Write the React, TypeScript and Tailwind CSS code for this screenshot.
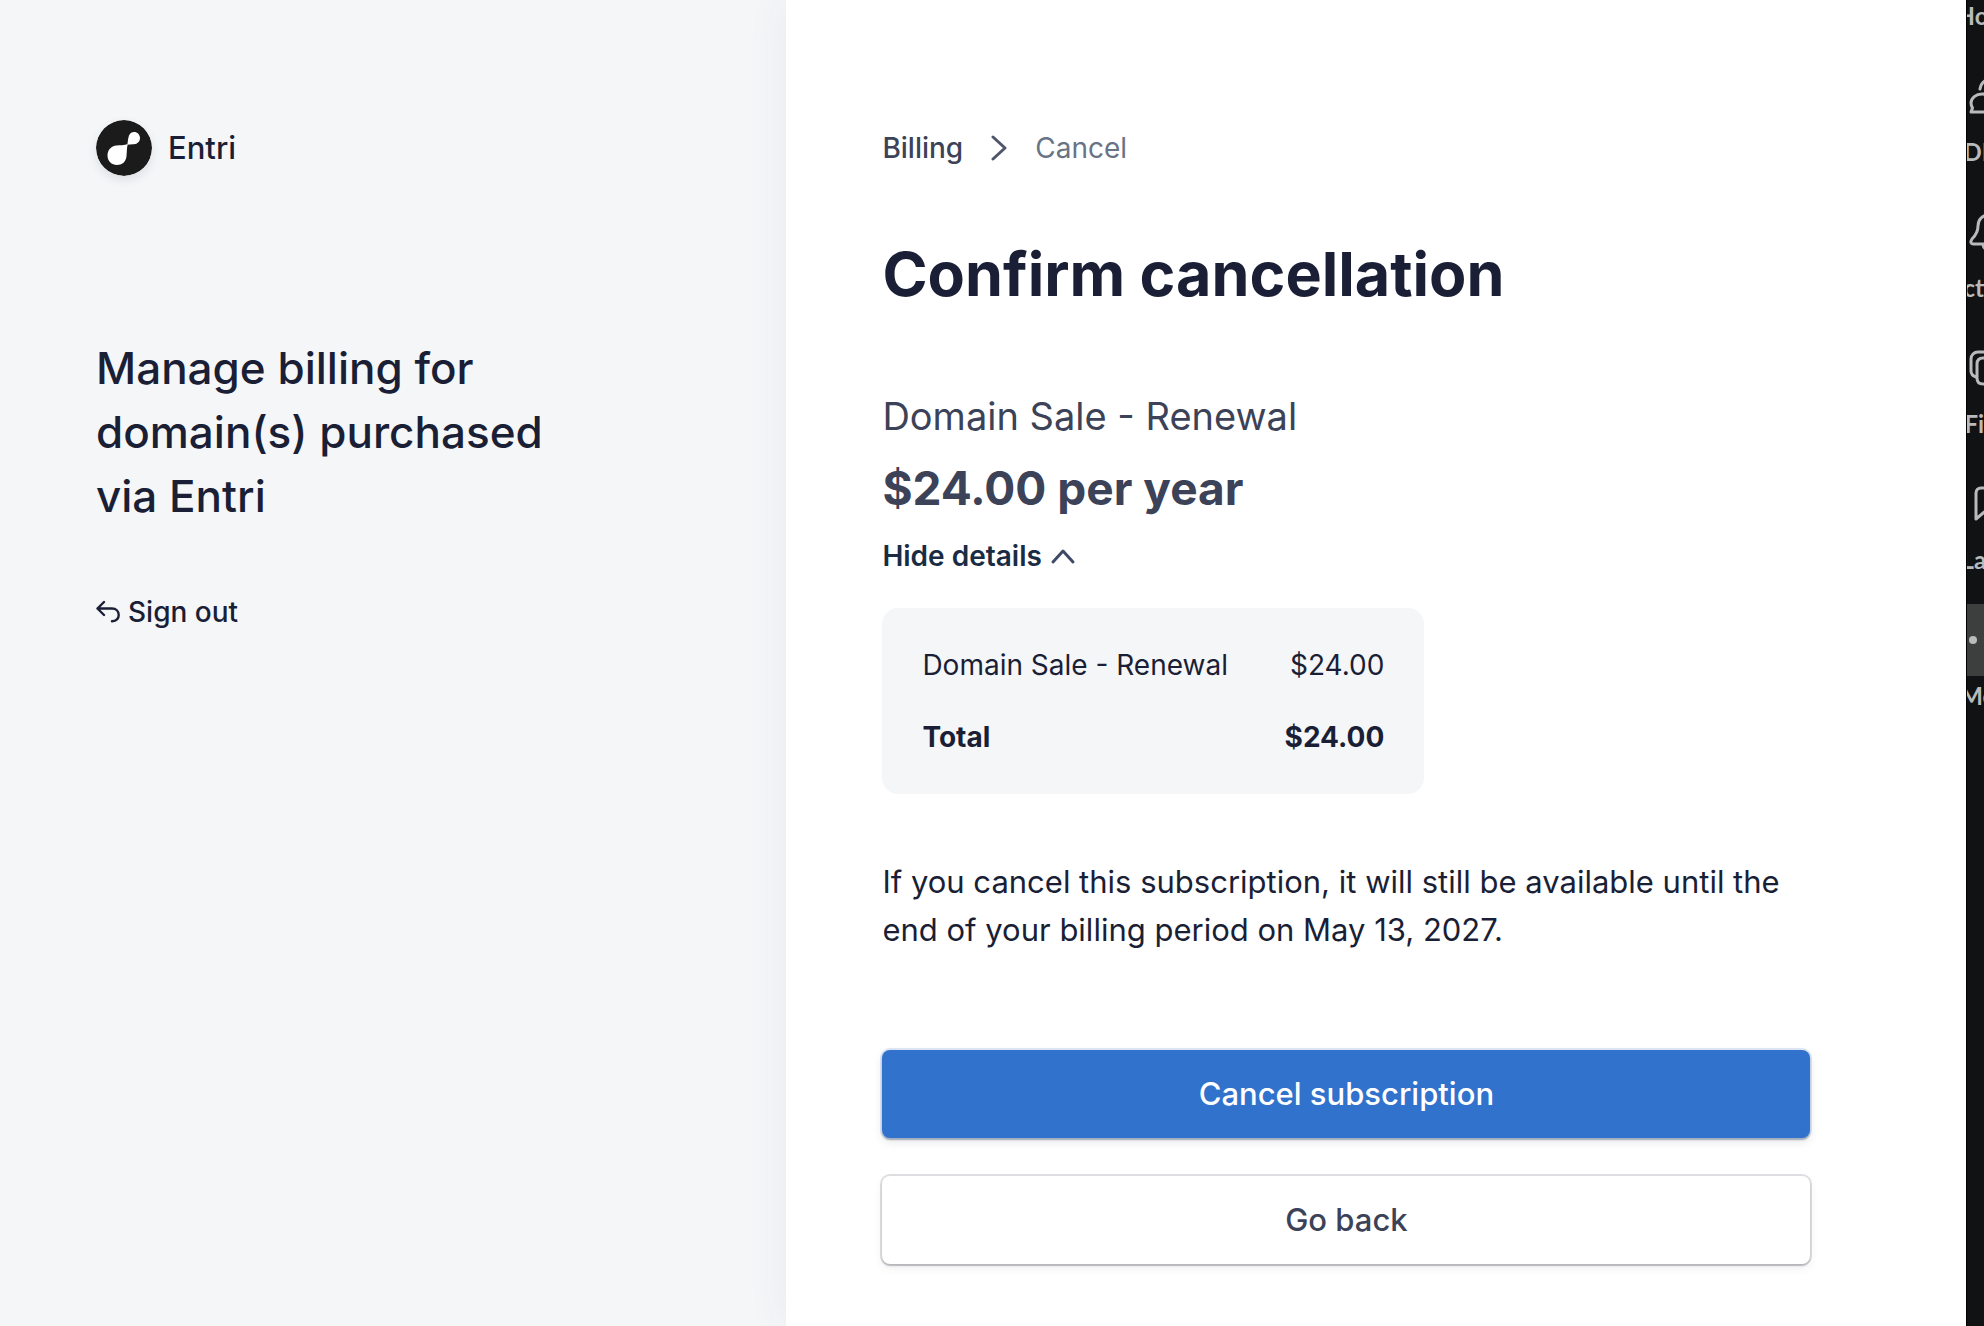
import type { ReactNode } from 'react';
import { useState } from 'react';

// ── Icons ────────────────────────────────────────────────────────────────────

function EntriLogo() {
  return (
    <svg viewBox="0 0 56 56" className="w-14 h-14 rounded-full shadow-[0_4px_10px_rgba(60,66,87,0.12)]" aria-hidden="true">
      <circle cx="28" cy="28" r="28" fill="#1b1b1b" />
      <path
        fill="#fff"
        d="M31.4 24.2C31.9 21 32 18.500 33 15.500C34 13 36 12 38 12C41.500 12 44 14.700 44 18C44 21.500 41.500 24 38 24.200C36 24.400 33.500 24.200 31.600 24.700C30.600 29 31 32.500 30.400 37C29.600 42 26 45 21 45C15.500 45 11.500 41 11.500 35.500C11.500 30 15 26 20.500 25.500C24.500 25.200 28 25.200 31.400 24.200Z"
      />
    </svg>
  );
}

function BackIcon() {
  return (
    <svg viewBox="0 0 24 24" className="w-6 h-6" fill="none" stroke="currentColor" strokeWidth={2.4} strokeLinecap="round" strokeLinejoin="round" aria-hidden="true">
      <path d="M8 2L1.500 8.500L8 15M1.500 8.500H16C20 8.500 22.700 11 22.700 15C22.700 18.700 20 21 16 21.300" />
    </svg>
  );
}

// ── Side rail ────────────────────────────────────────────────────────────────

interface RailItem {
  label: string;
  icon: ReactNode;
  active?: boolean;
}

const RAIL: RailItem[] = [
  {
    label: 'DMs',
    icon: <path d="M2 36L3.500 32C2.500 30 2 29 2 27C2 22 7 18 13 18C19 18 24 22 24 27C24 32 20 36 14 36ZM11 13C12 6 18 2 25 2C33 2 38 8 38 15V27H28" />,
  },
  {
    label: 'Activity',
    icon: <path d="M20 3C13 3 9 8 9 14C9 20 7 23 3 27C1 30 2 32 4 32H36C38 32 39 30 37 27C33 23 31 20 31 14C31 8 27 3 20 3ZM14 33C15 39 25 39 26 33" />,
  },
  {
    label: 'Files',
    icon: <path d="M7 29C4 28 2 26 2 23V11C2 7 5 4 9 4H24C28 4 30 6 31 9M14 10H32C36 10 38 12 38 16V30C38 34 36 36 32 36H14C10 36 8 34 8 30V16C8 12 10 10 14 10Z" />,
  },
  {
    label: 'Later',
    icon: <path d="M7 35V9C7 6 9 4 12 4H28C31 4 33 6 33 9V35L20 24Z" />,
  },
  {
    label: 'More',
    active: true,
    icon: (
      <g fill="currentColor" stroke="none">
        <circle cx="4" cy="20" r="4" />
        <circle cx="20" cy="20" r="4" />
        <circle cx="36" cy="20" r="4" />
      </g>
    ),
  },
];

function Rail() {
  return (
    <nav aria-label="Workspace" className="overflow-hidden bg-[#101213] border-l border-black text-[#b9babb] font-['Lato',sans-serif]">
      <div className="w-11 pt-1 flex flex-col items-center gap-8 text-[24px] leading-6 font-bold whitespace-nowrap">
        <span>Home</span>
        {RAIL.map(item => (
          <div key={item.label} className="flex flex-col items-center gap-2">
            <span className={`w-[72px] h-[72px] flex items-center justify-center ${item.active ? 'bg-[#3d3f3f]' : ''}`}>
              <svg viewBox="0 0 40 40" className="w-10 h-10" fill="none" stroke="currentColor" strokeWidth={3} strokeLinecap="round" strokeLinejoin="round" aria-hidden="true">
                {item.icon}
              </svg>
            </span>
            <span>{item.label}</span>
          </div>
        ))}
      </div>
    </nav>
  );
}

// ── Page ─────────────────────────────────────────────────────────────────────

export default function App() {
  const [open, setOpen] = useState(true);

  return (
    <div className="min-h-screen grid grid-cols-[2fr_3fr_18px] bg-[#f5f6f8] text-[#1a1f36] font-['Inter',sans-serif]">

      {/* Merchant panel */}
      <aside className="px-24 pt-[120px]">
        <div className="flex items-center gap-4">
          <EntriLogo />
          <span className="text-[31px] leading-10 font-medium">Entri</span>
        </div>
        <h2 className="mt-40 max-w-[480px] text-[44px] leading-[64px] font-medium">
          Manage billing for domain(s) purchased via Entri
        </h2>
        <a href="#" className="mt-16 inline-flex items-center gap-2 text-[28px] leading-10 font-medium">
          <BackIcon />
          Sign out
        </a>
      </aside>

      {/* Cancellation form */}
      <main className="px-24 pt-32 bg-white shadow-[0_0_40px_rgba(60,66,87,0.07)]">
        <div className="max-w-[928px]">
          <nav aria-label="Breadcrumb" className="flex items-center text-[28px] leading-10">
            <a href="#" className="font-medium text-[#3c4257]">Billing</a>
            <svg viewBox="0 0 16 26" className="mx-7 w-4 h-[26px] text-[#4f566b]" fill="none" stroke="currentColor" strokeWidth={3} strokeLinecap="round" strokeLinejoin="round" aria-hidden="true">
              <path d="M2 2L14 13L2 24" />
            </svg>
            <span aria-current="page" className="text-[#697386]">Cancel</span>
          </nav>

          <h1 className="mt-16 text-[61px] leading-[84px] font-bold">Confirm cancellation</h1>

          <p className="mt-[74px] text-[38px] leading-[52px] text-[#3c4257]">Domain Sale - Renewal</p>
          <p className="mt-[14px] text-[46px] leading-[64px] font-bold text-[#3c4257]">$24.00 per year</p>
          <button
            type="button"
            aria-expanded={open}
            onClick={() => setOpen(!open)}
            className="mt-4 flex items-center gap-2 text-[28px] leading-10 font-semibold text-[#1a2c44]"
          >
            {open ? 'Hide details' : 'View details'}
            <svg viewBox="0 0 26 18" className={`w-[26px] h-[18px] text-[#3f4b66] ${open ? '' : 'rotate-180'}`} fill="none" stroke="currentColor" strokeWidth={3} strokeLinecap="round" strokeLinejoin="round" aria-hidden="true">
              <path d="M3 15L13 4L23 15" />
            </svg>
          </button>

          {open && (
            <div className="mt-8 max-w-[542px] px-10 py-[37px] rounded-2xl bg-[#f5f6f8]">
              <table className="w-full text-[28px] leading-10">
                <tbody>
                  <tr>
                    <td className="pb-8">Domain Sale - Renewal</td>
                    <td className="pb-8 text-right">$24.00</td>
                  </tr>
                  <tr className="font-bold">
                    <th scope="row" className="text-left">Total</th>
                    <td className="text-right">$24.00</td>
                  </tr>
                </tbody>
              </table>
            </div>
          )}

          <p className="mt-16 text-[31px] leading-[48px]">
            If you cancel this subscription, it will still be available until the end of your billing period on May 13, 2027.
          </p>

          <div className="mt-24 flex flex-col gap-[38px] text-[31px] leading-10 font-medium">
            <button type="button" className="h-[88px] rounded-lg bg-[#3172cd] text-white shadow-[0_0_0_2px_rgba(49,114,205,0.16),0_2px_2px_rgba(0,0,0,0.24),0_4px_10px_rgba(60,66,87,0.12)]">
              Cancel subscription
            </button>
            <button type="button" className="h-[88px] rounded-lg bg-white text-[#3c4257] shadow-[0_0_0_2px_rgba(60,66,87,0.16),0_2px_2px_rgba(0,0,0,0.16),0_4px_10px_rgba(60,66,87,0.08)]">
              Go back
            </button>
          </div>
        </div>
      </main>

      <Rail />
    </div>
  );
}
